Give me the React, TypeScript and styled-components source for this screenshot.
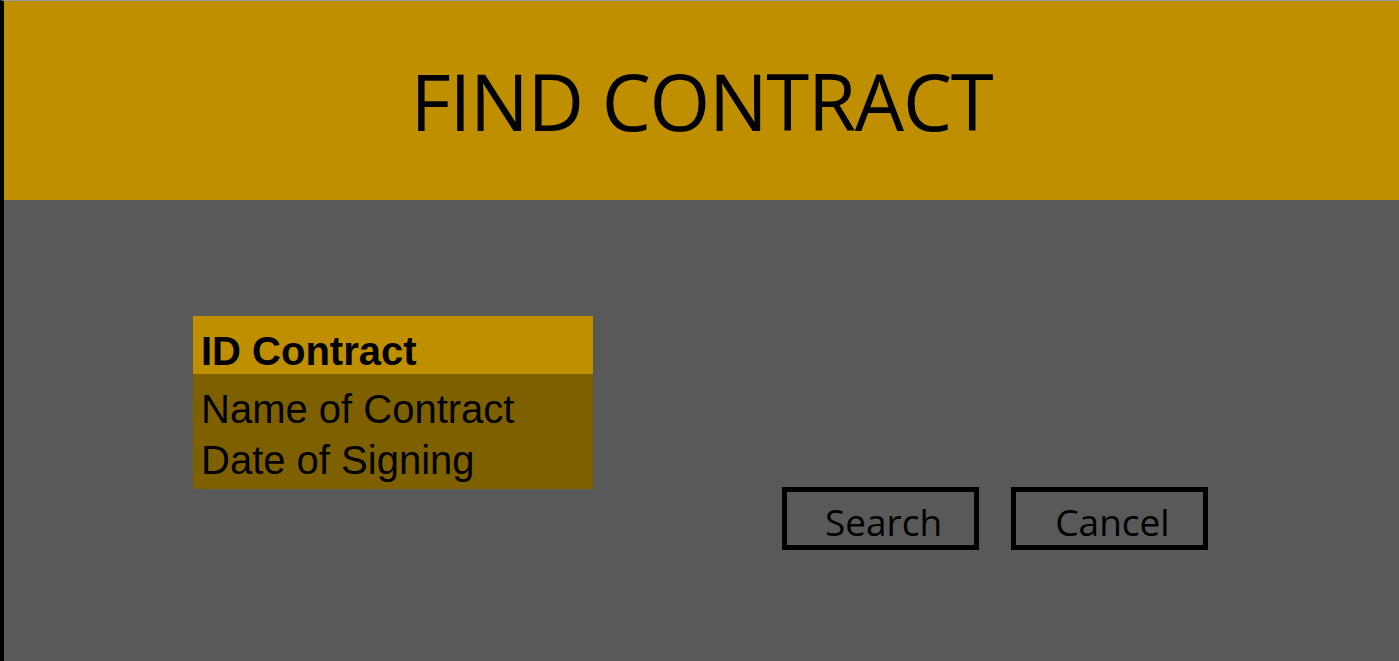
import React, { useState } from 'react'
import styled, { createGlobalStyle } from 'styled-components'

const GlobalStyle = createGlobalStyle`
  html, body {
    margin: 0;
    padding: 0;
    background: #595959;
  }
  * { box-sizing: border-box; }
`

const fields = ['ID Contract', 'Name of Contract', 'Date of Signing']

export default function App() {
    const [selected, setSelected] = useState(0)

    return <Page>
        <GlobalStyle />
        <Header>
            <Title>FIND CONTRACT</Title>
        </Header>
        <Body>
            <ListBox>
                <Row $active={selected === 0} $first onClick={() => setSelected(0)}>{fields[0]}</Row>
                <RestGroup>
                    {fields.slice(1).map((f, i) => (
                        <Row key={f} $active={selected === i + 1} onClick={() => setSelected(i + 1)}>{f}</Row>
                    ))}
                </RestGroup>
            </ListBox>
            <ButtonRow>
                <Button>Search</Button>
                <Button>Cancel</Button>
            </ButtonRow>
        </Body>
    </Page>
}

const Page = styled.div`
width: 1399px;
height: 661px;
border-top: 1px solid #9c9c9c;
border-left: 4px solid #000;
background: #595959;
display: flex;
flex-direction: column;
overflow: hidden;
`

const Header = styled.header`
height: 199px;
background: #bf8f00;
display: flex;
align-items: center;
justify-content: center;
`

const Title = styled.h1`
margin: 0;
padding-top: 0;
font-family: 'Open Sans', sans-serif;
font-weight: 400;
font-size: 78px;
letter-spacing: -1.3px;
color: #000;
`

const Body = styled.main`
flex: 1;
padding: 116px 0 0 189px;
display: grid;
grid-template-columns: 400px auto;
grid-template-rows: 171px 63px;
column-gap: 189px;
align-items: start;
`

const ListBox = styled.div`
grid-column: 1;
grid-row: 1 / span 2;
height: 173px;
background: #7f6000;
font-family: 'Liberation Sans', Arial, sans-serif;
font-size: 40px;
color: #000;
`

const RestGroup = styled.div`
padding-top: 10px;
`

const Row = styled.div<{ $active?: boolean; $first?: boolean }>`
padding-left: 8px;
line-height: ${p => p.$first ? '50px' : '51px'};
height: ${p => p.$first ? '58px' : '51px'};
padding-top: ${p => p.$first ? '10px' : '0'};
font-weight: ${p => p.$active ? 700 : 400};
background: ${p => p.$active ? '#bf8f00' : 'transparent'};
white-space: nowrap;
cursor: default;
`

const ButtonRow = styled.div`
grid-column: 2;
grid-row: 2;
display: flex;
gap: 32px;
`

const Button = styled.button`
width: 197px;
height: 63px;
padding: 4px 0 0 6px;
border: 5px solid #000;
background: transparent;
font-family: 'Open Sans', sans-serif;
font-size: 37px;
color: #000;
cursor: pointer;
`
